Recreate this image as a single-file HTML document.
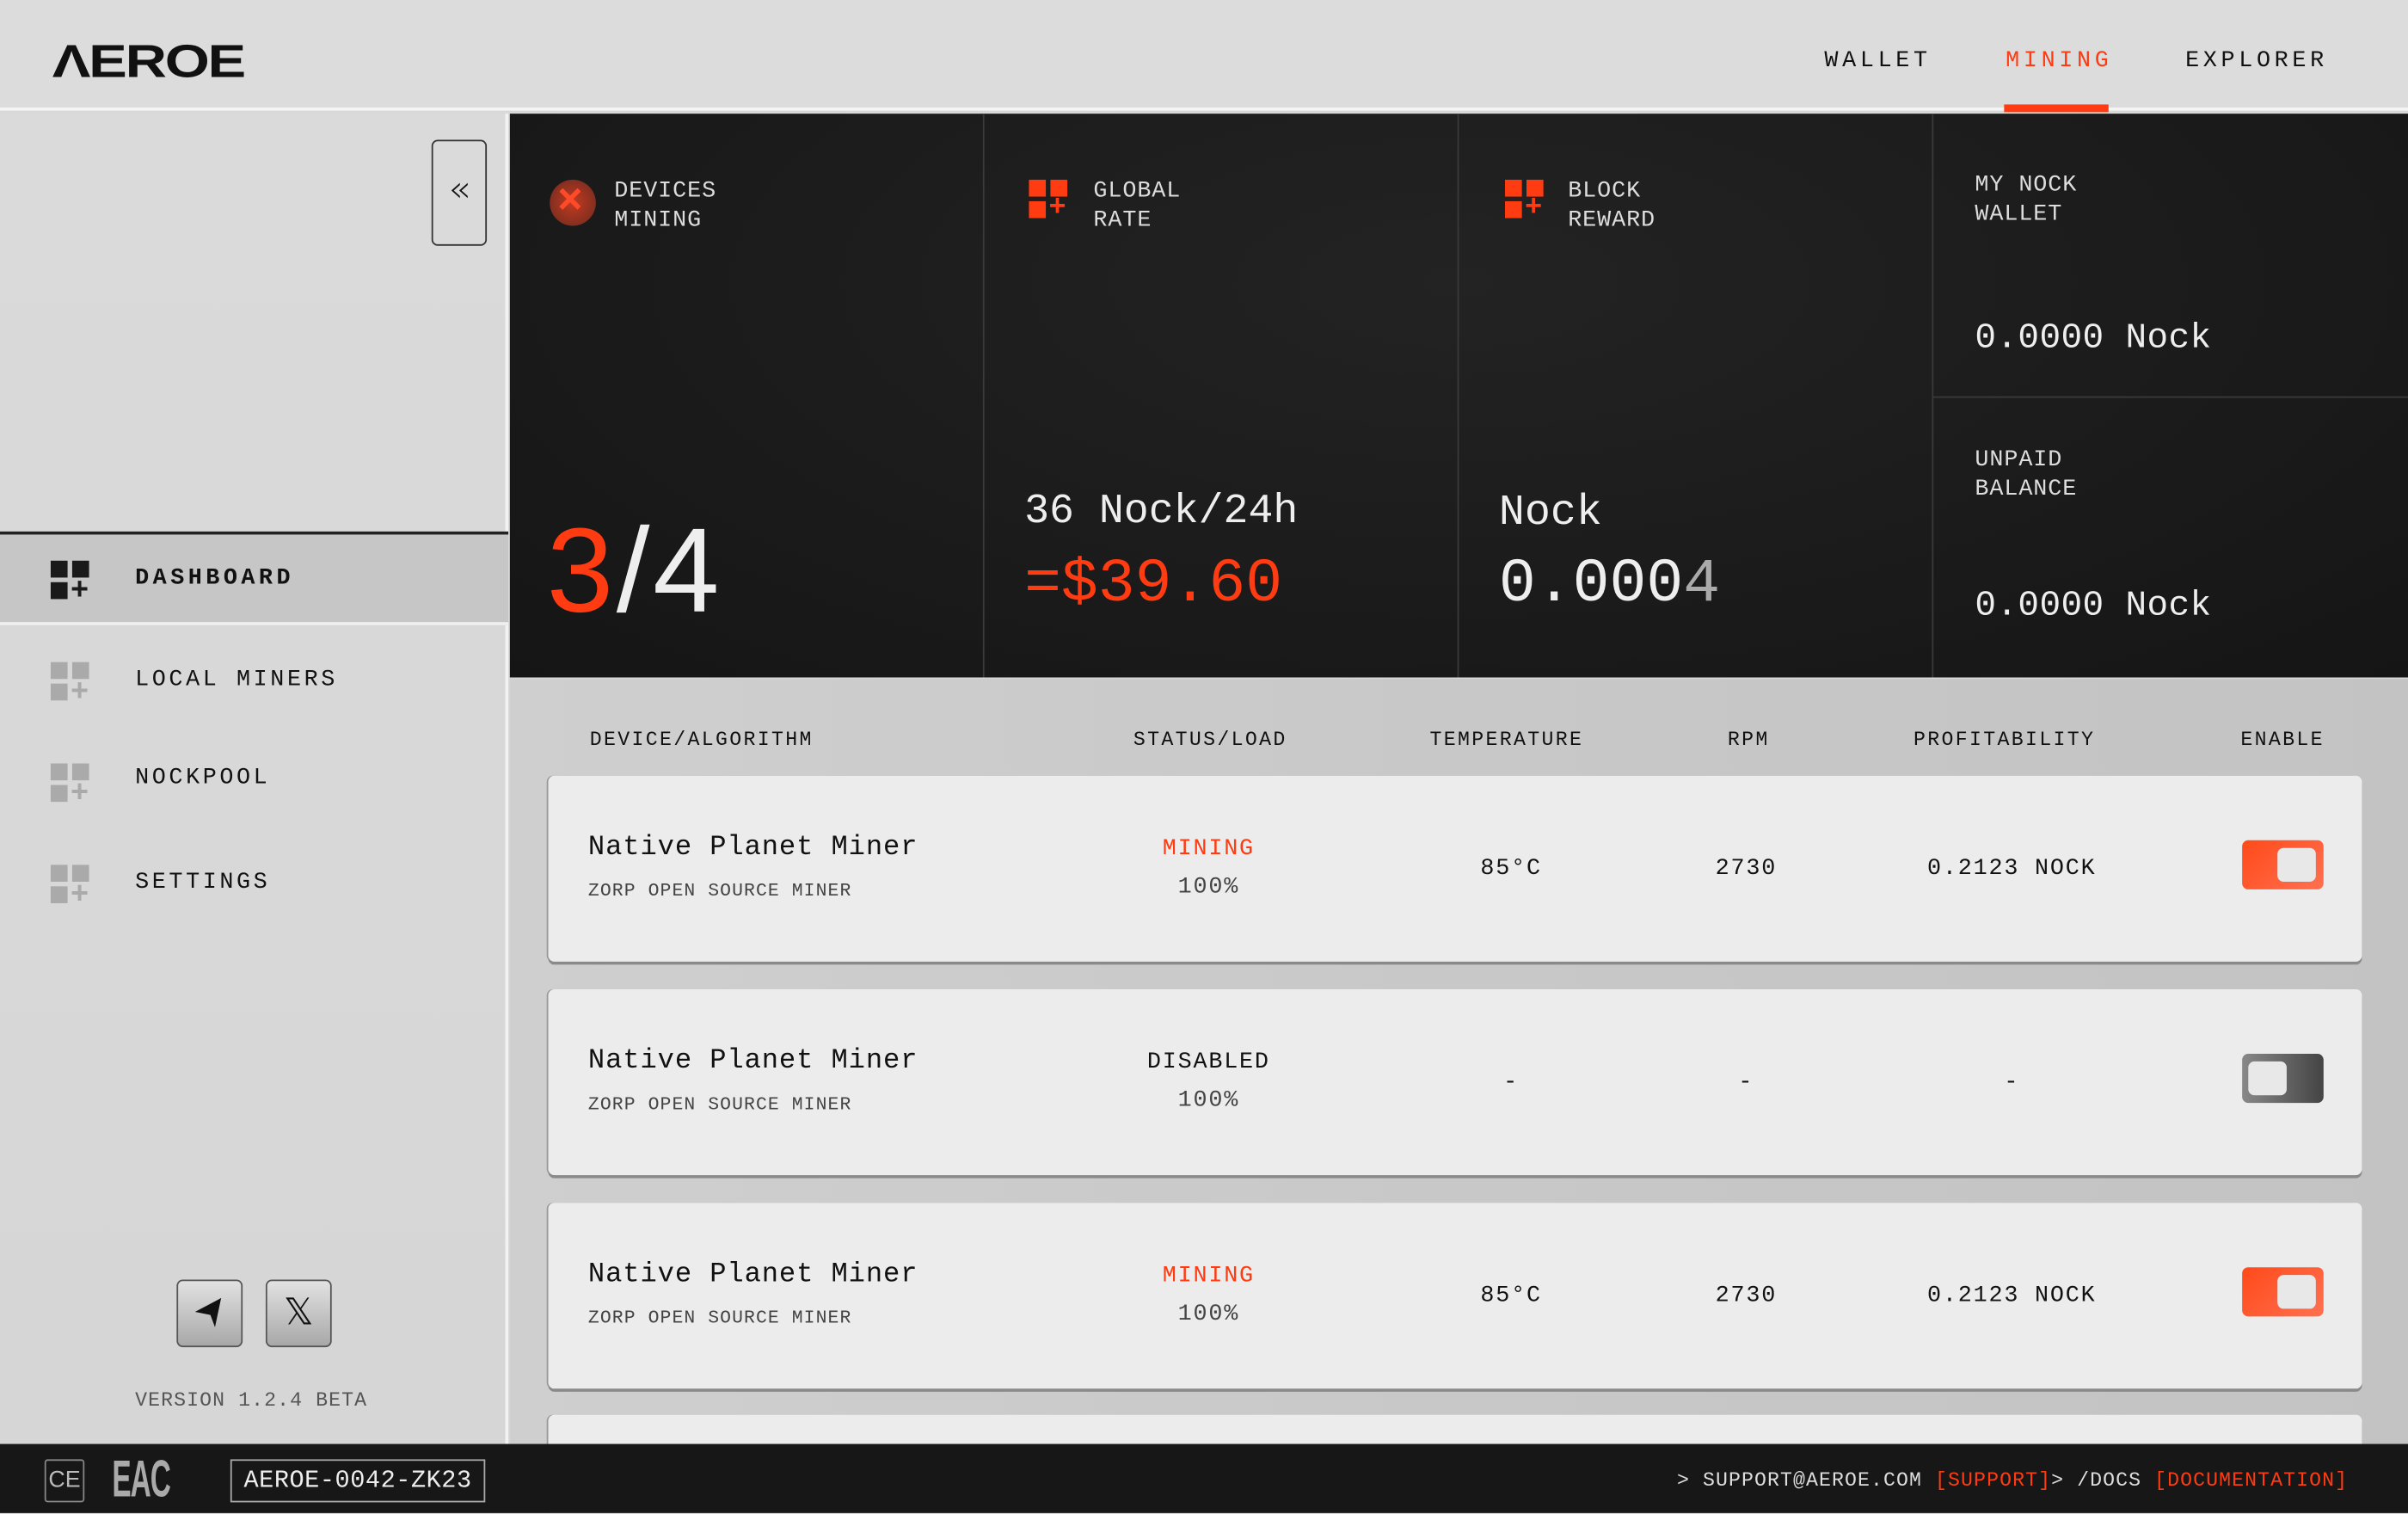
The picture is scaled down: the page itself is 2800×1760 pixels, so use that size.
<!DOCTYPE html>
<html><head><meta charset="utf-8"><style>
*{margin:0;padding:0;box-sizing:border-box}
html,body{width:2800px;height:1760px;overflow:hidden;background:#d8d8d8}
#w{width:1568px;height:985px;overflow:hidden;transform:scale(1.785714);transform-origin:0 0;position:relative;font-family:"Liberation Mono",monospace;color:#111}
.a{position:absolute}
.hdr{left:0;top:0;width:1568px;height:72px;background:#dcdcdc;border-bottom:2px solid #f4f4f4}
.logo{left:34px;top:24px;font-family:"Liberation Sans",sans-serif;font-weight:bold;font-size:30px;letter-spacing:-1px;transform:scaleX(1.25);transform-origin:0 0}
.nav{top:31px;font-size:15px;letter-spacing:2.6px}
.side{left:0;top:74px;width:331px;height:866px;background:linear-gradient(#dadada,#d6d6d6);border-right:2px solid #f2f2f2}
.item{left:88px;font-size:15px;letter-spacing:2px}
.ic{left:33px;width:26px;height:26px}
.ic i{position:absolute;width:11px;height:11px;background:currentColor}
.dark{left:332px;top:74px;width:1236px;height:367px;background:radial-gradient(ellipse at 50% 30%,#232323,#151515)}
.vl{width:1px;background:#3a3a3a}
.lbl{font-size:15px;letter-spacing:0.5px;color:#ddd;line-height:19px}
.tbl{left:332px;top:442px;width:1236px;height:498px;background:linear-gradient(90deg,#cfcfcf,#c8c8c8 50%,#c3c3c3)}
.th{top:474px;font-size:13px;letter-spacing:1.3px}
.card{left:357px;width:1181px;height:121px;background:#ececec;border-radius:4px;box-shadow:0 2px 0 #8a8a8a,-1px 0 0 #999}
.card .t{position:absolute;left:26px;top:37px;font-size:18px;letter-spacing:0.5px}
.card .s{position:absolute;left:26px;top:68px;font-size:12px;letter-spacing:0.6px;color:#444}
.card .c{position:absolute;font-size:15px;letter-spacing:1px;text-align:center}
.tg{position:absolute;left:1103px;top:42px;width:53px;height:32px;border-radius:4px}
.tg b{position:absolute;top:5px;width:25px;height:22px;background:#e8e8e8;border-radius:4px}
.foot{left:0;top:940px;width:1568px;height:46px;background:#171717;color:#ddd}
.sb{width:43px;height:44px;border:1.5px solid #555;border-radius:4px;background:linear-gradient(#e2e2e2,#a8a8a8);top:833px}
</style></head><body><div id="w">
<div class="a hdr"></div>
<div class="a logo">ΛEROE</div>
<div class="a nav" style="left:1188px">WALLET</div>
<div class="a nav" style="left:1306px;color:#ff3b12">MINING</div>
<div class="a" style="left:1305px;top:68px;width:68px;height:5px;background:#ff3b12"></div>
<div class="a nav" style="left:1423px">EXPLORER</div>

<div class="a side"></div>
<div class="a" style="left:281px;top:91px;width:36px;height:69px;border:1.5px solid #333;border-radius:4px;font-size:24px;text-align:center;line-height:62px;font-family:'DejaVu Sans',sans-serif;font-weight:200">«</div>
<div class="a" style="left:0;top:346px;width:331px;height:61px;background:#c6c6c6;border-top:2px solid #222;border-bottom:2px solid #f0f0f0"></div>
<div class="a ic" style="top:365px;color:#1a1a1a"><i style="left:0;top:0"></i><i style="left:14px;top:0"></i><i style="left:0;top:14px"></i><span style="position:absolute;left:13px;top:8px;font-size:20px;font-weight:bold;font-family:'Liberation Sans'">+</span></div>
<div class="a item" style="top:368px;font-weight:bold;letter-spacing:2.5px">DASHBOARD</div>
<div class="a ic" style="top:431px;color:#aaa"><i style="left:0;top:0"></i><i style="left:14px;top:0"></i><i style="left:0;top:14px"></i><span style="position:absolute;left:13px;top:8px;font-size:20px;font-weight:bold;font-family:'Liberation Sans'">+</span></div>
<div class="a item" style="top:434px">LOCAL MINERS</div>
<div class="a ic" style="top:497px;color:#aaa"><i style="left:0;top:0"></i><i style="left:14px;top:0"></i><i style="left:0;top:14px"></i><span style="position:absolute;left:13px;top:8px;font-size:20px;font-weight:bold;font-family:'Liberation Sans'">+</span></div>
<div class="a item" style="top:498px">NOCKPOOL</div>
<div class="a ic" style="top:563px;color:#aaa"><i style="left:0;top:0"></i><i style="left:14px;top:0"></i><i style="left:0;top:14px"></i><span style="position:absolute;left:13px;top:8px;font-size:20px;font-weight:bold;font-family:'Liberation Sans'">+</span></div>
<div class="a item" style="top:566px">SETTINGS</div>
<div class="a sb" style="left:115px"><svg width="40" height="41" viewBox="0 0 40 41"><path d="M11 20 L28 11 L24 30 L21 22 Z" fill="#111"/></svg></div>
<div class="a sb" style="left:173px;text-align:center;font:24px 'DejaVu Sans',sans-serif;line-height:40px">𝕏</div>
<div class="a" style="left:88px;top:904px;font-size:13px;letter-spacing:0.6px;color:#555">VERSION 1.2.4 BETA</div>

<div class="a dark"></div>
<div class="a vl" style="left:640px;top:74px;height:367px"></div>
<div class="a vl" style="left:949px;top:74px;height:367px"></div>
<div class="a vl" style="left:1258px;top:74px;height:367px"></div>
<div class="a" style="left:1258px;top:258px;width:310px;height:1px;background:#3a3a3a"></div>
<div class="a" style="left:358px;top:117px;width:30px;height:30px;border-radius:50%;background:radial-gradient(#c23a20,#6a2a20)"><span style="position:absolute;left:5px;top:-3px;font:bold 28px 'Liberation Sans';color:#ff4a2a">×</span></div>
<div class="a lbl" style="left:400px;top:115px">DEVICES<br>MINING</div>
<div class="a" style="left:670px;top:117px;width:27px;height:27px;color:#ff3b12"><i style="position:absolute;left:0;top:0;width:11px;height:11px;background:#ff3b12"></i><i style="position:absolute;left:14px;top:0;width:11px;height:11px;background:#ff3b12"></i><i style="position:absolute;left:0;top:14px;width:11px;height:11px;background:#ff3b12"></i><span style="position:absolute;left:13px;top:7px;font:bold 19px 'Liberation Sans'">+</span></div>
<div class="a lbl" style="left:712px;top:115px">GLOBAL<br>RATE</div>
<div class="a" style="left:980px;top:117px;width:27px;height:27px;color:#ff3b12"><i style="position:absolute;left:0;top:0;width:11px;height:11px;background:#ff3b12"></i><i style="position:absolute;left:14px;top:0;width:11px;height:11px;background:#ff3b12"></i><i style="position:absolute;left:0;top:14px;width:11px;height:11px;background:#ff3b12"></i><span style="position:absolute;left:13px;top:7px;font:bold 19px 'Liberation Sans'">+</span></div>
<div class="a lbl" style="left:1021px;top:115px">BLOCK<br>REWARD</div>
<div class="a lbl" style="left:1286px;top:111px">MY NOCK<br>WALLET</div>
<div class="a lbl" style="left:1286px;top:290px">UNPAID<br>BALANCE</div>
<div class="a" style="left:356px;top:326px;font:78px 'Liberation Sans',sans-serif;color:#eee;letter-spacing:2px"><span style="color:#ff3b12">3</span>/4</div>
<div class="a" style="left:667px;top:319px;font-size:27px;color:#eee;letter-spacing:0px">36 Nock/24h</div>
<div class="a" style="left:667px;top:359px;font-size:40px;color:#ff3b12;letter-spacing:0px">=$39.60</div>
<div class="a" style="left:976px;top:319px;font-size:28px;color:#eee">Nock</div>
<div class="a" style="left:976px;top:359px;font-size:40px;color:#eee">0.000<span style="color:#aaa">4</span></div>
<div class="a" style="left:1286px;top:207px;font-size:23px;color:#eee;letter-spacing:0.2px">0.0000 Nock</div>
<div class="a" style="left:1286px;top:381px;font-size:23px;color:#eee;letter-spacing:0.2px">0.0000 Nock</div>

<div class="a tbl"></div>
<div class="a th" style="left:384px">DEVICE/ALGORITHM</div>
<div class="a th" style="left:738px">STATUS/LOAD</div>
<div class="a th" style="left:931px">TEMPERATURE</div>
<div class="a th" style="left:1125px">RPM</div>
<div class="a th" style="left:1246px">PROFITABILITY</div>
<div class="a th" style="left:1459px">ENABLE</div>

<div class="a card" style="top:505px"><div class="t">Native Planet Miner</div><div class="s">ZORP OPEN SOURCE MINER</div>
<div class="c" style="left:370px;width:120px;top:39px;color:#ff3b12">MINING</div><div class="c" style="left:370px;width:120px;top:64px;color:#444">100%</div>
<div class="c" style="left:567px;width:120px;top:52px">85°C</div><div class="c" style="left:720px;width:120px;top:52px">2730</div><div class="c" style="left:873px;width:160px;top:52px">0.2123 NOCK</div>
<div class="tg" style="background:linear-gradient(135deg,#ff4a1a,#ff7050)"><b style="left:23px"></b></div></div>

<div class="a card" style="top:644px"><div class="t">Native Planet Miner</div><div class="s">ZORP OPEN SOURCE MINER</div>
<div class="c" style="left:370px;width:120px;top:39px">DISABLED</div><div class="c" style="left:370px;width:120px;top:64px;color:#444">100%</div>
<div class="c" style="left:567px;width:120px;top:52px">-</div><div class="c" style="left:720px;width:120px;top:52px">-</div><div class="c" style="left:873px;width:160px;top:52px">-</div>
<div class="tg" style="background:linear-gradient(90deg,#888,#444)"><b style="left:4px"></b></div></div>

<div class="a card" style="top:783px"><div class="t">Native Planet Miner</div><div class="s">ZORP OPEN SOURCE MINER</div>
<div class="c" style="left:370px;width:120px;top:39px;color:#ff3b12">MINING</div><div class="c" style="left:370px;width:120px;top:64px;color:#444">100%</div>
<div class="c" style="left:567px;width:120px;top:52px">85°C</div><div class="c" style="left:720px;width:120px;top:52px">2730</div><div class="c" style="left:873px;width:160px;top:52px">0.2123 NOCK</div>
<div class="tg" style="background:linear-gradient(135deg,#ff4a1a,#ff7050)"><b style="left:23px"></b></div></div>

<div class="a card" style="top:921px"></div>

<div class="a foot"></div>
<div class="a" style="left:29px;top:950px;width:26px;height:28px;border:1px solid #888;border-radius:2px;color:#bbb;font:15px 'Liberation Sans';text-align:center;line-height:26px">CE</div>
<div class="a" style="left:73px;top:944px;color:#aaa;font:bold 34px 'Liberation Sans';transform:scaleX(0.55);transform-origin:0 0;letter-spacing:-1px">EAC</div>
<div class="a" style="left:150px;top:950px;width:166px;height:28px;border:1px solid #aaa;font-size:16px;letter-spacing:0.3px;text-align:center;line-height:26px;color:#eee">AEROE-0042-ZK23</div>
<div class="a" style="left:1092px;top:956px;font-size:13px;letter-spacing:0.6px;color:#ddd">&gt; SUPPORT@AEROE.COM <span style="color:#ff3b12">[SUPPORT]</span>&gt; /DOCS <span style="color:#ff3b12">[DOCUMENTATION]</span></div>
</div></body></html>
